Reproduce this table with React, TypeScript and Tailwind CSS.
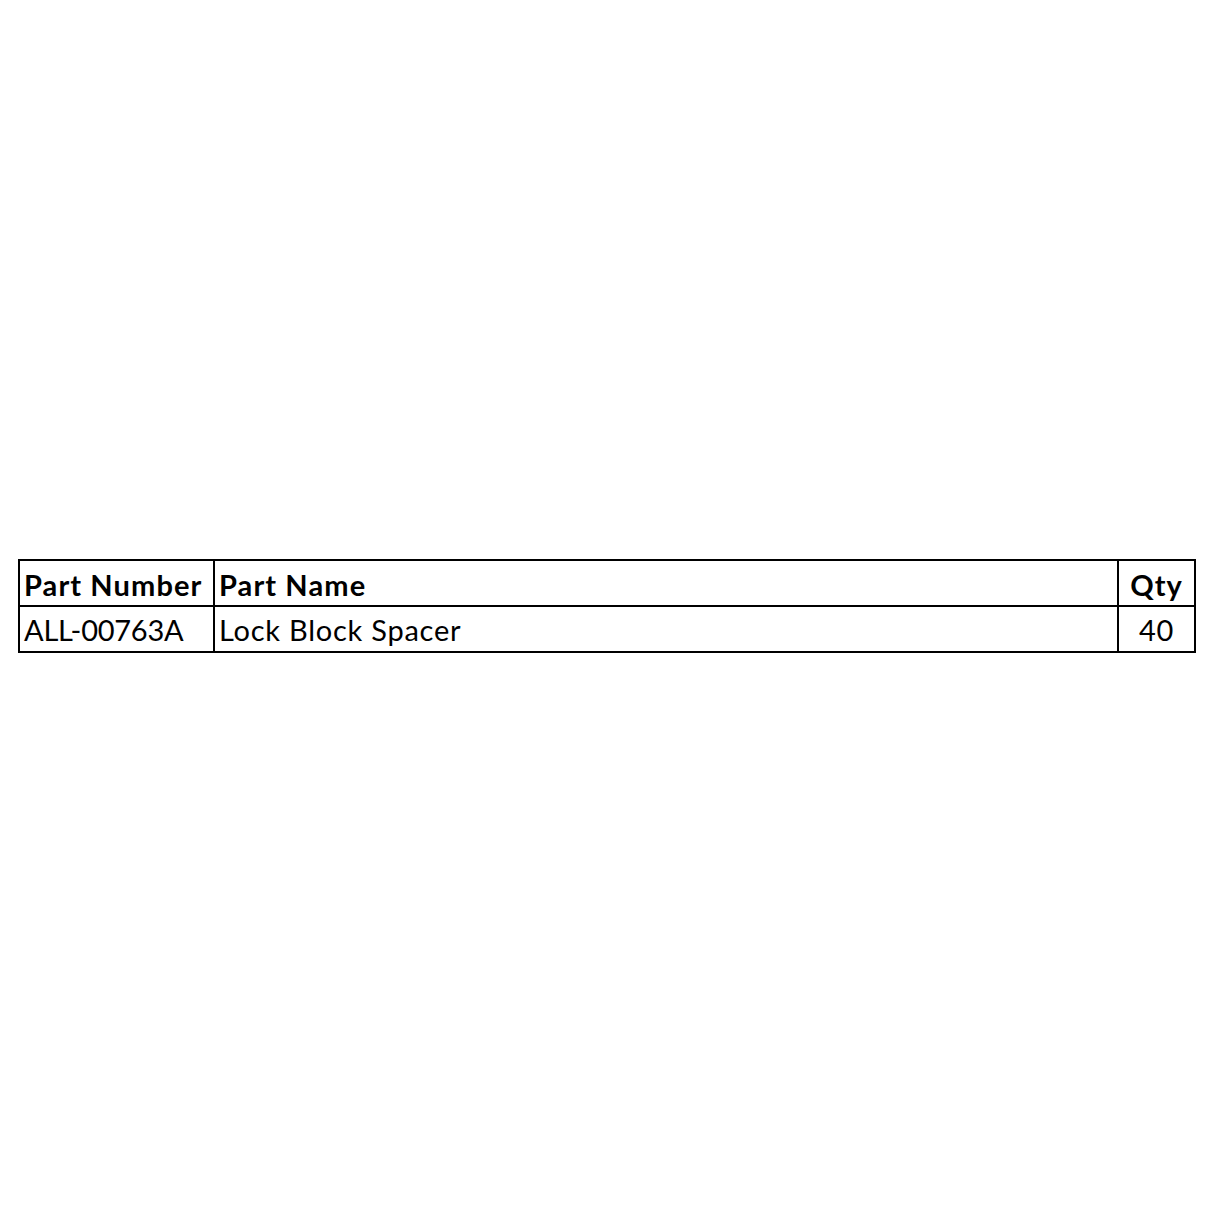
export default function App() {
  return (
    <div className="w-[1214px] h-[1214px] bg-white flex items-start">
      <div className="mt-[559px] ml-[18px]">
        <table
          className="border-collapse text-black"
          style={{ fontFamily: "Lato, 'Open Sans', sans-serif" }}
        >
          <tbody>
            <tr className="h-[46px]">
              <td className="border-2 border-black w-[195px] pl-[4px] pt-[3px] text-[29px] tracking-[1.1px] font-bold leading-none align-middle whitespace-nowrap">Part Number</td>
              <td className="border-2 border-black w-[904px] pl-[4px] pt-[3px] text-[29px] tracking-[1.1px] font-bold leading-none align-middle">Part Name</td>
              <td className="border-2 border-black w-[77px] pt-[3px] text-[29px] tracking-[1px] font-bold leading-none align-middle text-center">Qty</td>
            </tr>
            <tr className="h-[46px]">
              <td className="border-2 border-black pl-[4px] pt-[1px] text-[29px] tracking-[-0.25px] leading-none align-middle whitespace-nowrap">ALL-00763A</td>
              <td className="border-2 border-black pl-[4px] pt-[1px] text-[29px] tracking-[0.75px] leading-none align-middle">Lock Block Spacer</td>
              <td className="border-2 border-black pt-[1px] text-[29px] tracking-[0.75px] leading-none align-middle text-center">40</td>
            </tr>
          </tbody>
        </table>
      </div>
    </div>
  );
}
